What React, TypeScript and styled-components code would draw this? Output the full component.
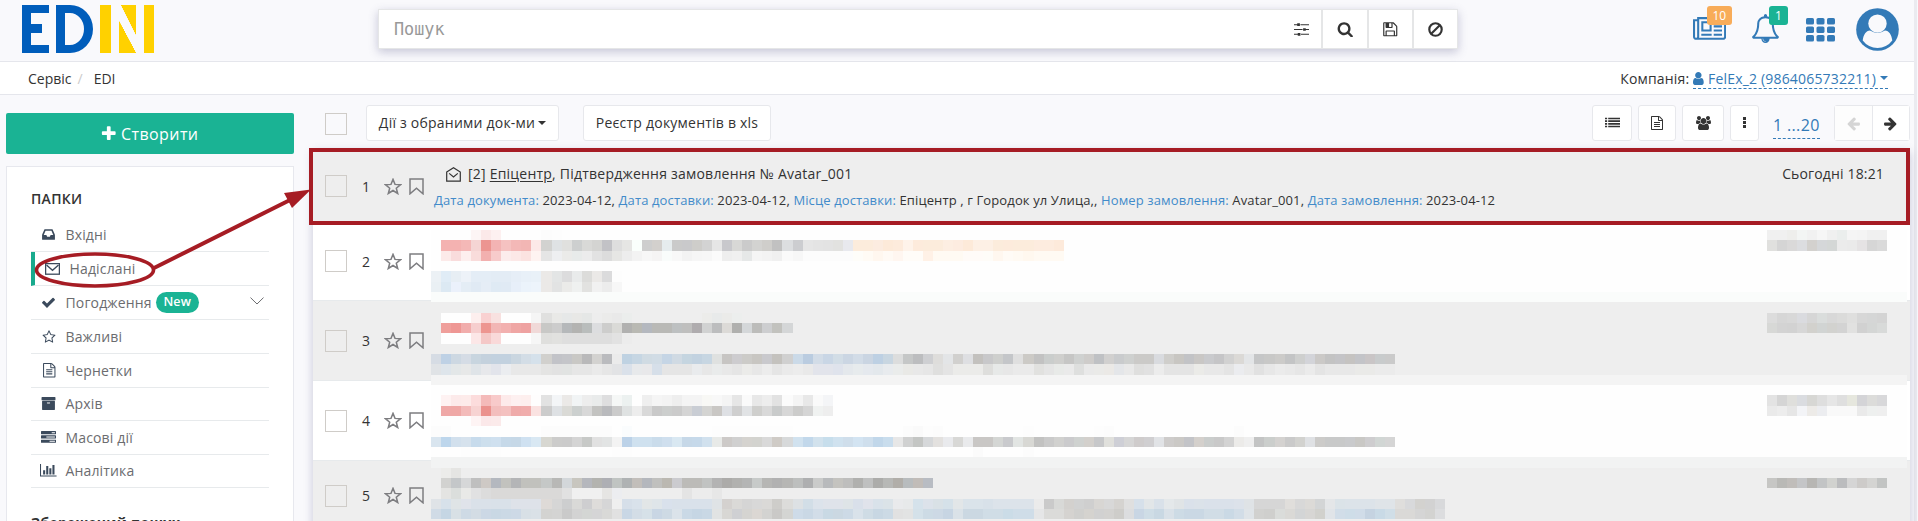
import React from "react";
import styled, { createGlobalStyle } from "styled-components";

const GlobalStyle = createGlobalStyle`
  * { box-sizing: border-box; }
  body { margin: 0; background: #f9f9fc; }
  body, input, button { font-family: "Open Sans", "Noto Sans", sans-serif; font-size: 14px; color: #333; }
`;

/* ---------- icons ---------- */

const PATHS = {
  newspaper:
    "M1024 512h-384v384h384v-384zm128 640v128h-640v-128h640zm0-768v640h-640v-640h640zm640 768v128h-512v-128h512zm0-256v128h-512v-128h512zm0-256v128h-512v-128h512zm0-256v128h-512v-128h512zm-1536 960v-960h-128v960q0 26 19 45t45 19 45-19 19-45zm1664 0v-1088h-1536v1088q0 33-11 64h1483q26 0 45-19t19-45zm128-1216v1216q0 80-56 136t-136 56h-1664q-80 0-136-56t-56-136v-1088h256v-128h1792z",
  bell:
    "M912 1696q0-16-16-16-59 0-101.5-42.5t-42.5-101.5q0-16-16-16t-16 16q0 73 51.5 124.5t124.5 51.5q16 0 16-16zm-666-288h1300q-266-300-266-832 0-51-24-105t-69-103-121.5-80.5-169.5-31.5-169.5 31.5-121.5 80.5-69 103-24 105q0 532-266 832zm1482 0q0 52-38 90t-90 38h-448q0 106-75 181t-181 75-181-75-75-181h-448q-52 0-90-38t-38-90q50-42 91-88t85-119.5 74.5-158.5 50-206 19.5-260q0-152 117-282.5t307-158.5q-8-19-8-39 0-40 28-68t68-28 68 28 28 68q0 20-8 39 190 28 307 158.5t117 282.5q0 139 19.5 260t50 206 74.5 158.5 85 119.5 91 88z",
  plus:
    "M1600 736v192q0 40-28 68t-68 28h-416v416q0 40-28 68t-68 28h-192q-40 0-68-28t-28-68v-416h-416q-40 0-68-28t-28-68v-192q0-40 28-68t68-28h416v-416q0-40 28-68t68-28h192q40 0 68 28t28 68v416h416q40 0 68 28t28 68z",
  inbox:
    "M1151 960h316q-1-3-2.5-8t-2.5-8l-212-496h-708l-212 496q-1 2-2.5 8t-2.5 8h316l95 192h320zm513 30v482q0 26-19 45t-45 19h-1408q-26 0-45-19t-19-45v-482q0-62 25-123l238-552q10-25 36.5-42t52.5-17h832q26 0 52.5 17t36.5 42l238 552q25 61 25 123z",
  check:
    "M1671 566q0 40-28 68l-724 724-136 136q-28 28-68 28t-68-28l-136-136-362-362q-28-28-28-68t28-68l136-136q28-28 68-28t68 28l294 295 656-657q28-28 68-28t68 28l136 136q28 28 28 68z",
  star:
    "M1201 1004l306-297-422-62-189-382-189 382-422 62 306 297-73 421 378-199 377 199zm527-357q0 22-26 48l-363 354 86 500q1 7 1 20 0 50-41 50-19 0-40-12l-449-236-449 236q-22 12-40 12-21 0-31.5-14.5t-10.5-35.5q0-6 2-20l86-500-364-354q-25-27-25-48 0-37 56-46l502-73 225-455q19-41 49-41t49 41l225 455 502 73q56 9 56 46z",
  file:
    "M1596 380q28 28 48 76t20 88v1152q0 40-28 68t-68 28h-1344q-40 0-68-28t-28-68v-1600q0-40 28-68t68-28h896q40 0 88 20t76 48zm-444-244v376h376q-10-29-22-41l-313-313q-12-12-41-22zm384 1528v-1024h-416q-40 0-68-28t-28-68v-416h-768v1536h1280zm-1024-864q0-14 9-23t23-9h704q14 0 23 9t9 23v64q0 14-9 23t-23 9h-704q-14 0-23-9t-9-23v-64zm736 224q14 0 23 9t9 23v64q0 14-9 23t-23 9h-704q-14 0-23-9t-9-23v-64q0-14 9-23t23-9h704zm0 256q14 0 23 9t9 23v64q0 14-9 23t-23 9h-704q-14 0-23-9t-9-23v-64q0-14 9-23t23-9h704z",
  archive:
    "M1088 832q0-26-19-45t-45-19h-256q-26 0-45 19t-19 45 19 45 45 19h256q26 0 45-19t19-45zm576-192v960q0 26-19 45t-45 19h-1408q-26 0-45-19t-19-45v-960q0-26 19-45t45-19h1408q26 0 45 19t19 45zm64-448v256q0 26-19 45t-45 19h-1536q-26 0-45-19t-19-45v-256q0-26 19-45t45-19h1536q26 0 45 19t19 45z",
  tasks:
    "M1024 1408h640v-128h-640v128zm-384-512h1024v-128h-1024v128zm640-512h384v-128h-384v128zm512 832v256q0 26-19 45t-45 19h-1664q-26 0-45-19t-19-45v-256q0-26 19-45t45-19h1664q26 0 45 19t19 45zm0-512v256q0 26-19 45t-45 19h-1664q-26 0-45-19t-19-45v-256q0-26 19-45t45-19h1664q26 0 45 19t19 45zm0-512v256q0 26-19 45t-45 19h-1664q-26 0-45-19t-19-45v-256q0-26 19-45t45-19h1664q26 0 45 19t19 45z",
  chart:
    "M640 896v512h-256v-512h256zm384-512v1024h-256v-1024h256zm1024 1152v128h-2048v-1536h128v1408h1920zm-640-896v768h-256v-768h256zm384-384v1152h-256v-1152h256z",
  search:
    "M1216 832q0-185-131.5-316.5t-316.5-131.5-316.5 131.5-131.5 316.5 131.5 316.5 316.5 131.5 316.5-131.5 131.5-316.5zm512 832q0 52-38 90t-90 38q-54 0-90-38l-343-342q-179 124-399 124-143 0-273.5-55.5t-225-150-150-225-55.5-273.5 55.5-273.5 150-225 225-150 273.5-55.5 273.5 55.5 225 150 150 225 55.5 273.5q0 220-124 399l343 343q37 37 37 90z",
  save:
    "M512 1536h768v-384h-768v384zm896 0h128v-896q0-14-10-38.5t-20-34.5l-281-281q-10-10-34-20t-39-10v416q0 40-28 68t-68 28h-576q-40 0-68-28t-28-68v-416h-128v1280h128v-416q0-40 28-68t68-28h832q40 0 68 28t28 68v416zm-384-928v-320q0-13-9.5-22.5t-22.5-9.5h-192q-13 0-22.5 9.5t-9.5 22.5v320q0 13 9.5 22.5t22.5 9.5h192q13 0 22.5-9.5t9.5-22.5zm640 32v928q0 40-28 68t-68 28h-1344q-40 0-68-28t-28-68v-1344q0-40 28-68t68-28h928q40 0 88 20t76 48l280 280q28 28 48 76t20 88z",
  users:
    "M593 896q-162 5-265 128h-134q-82 0-138-40.5t-56-118.5q0-353 124-353 6 0 43.5 21t97.5 42.5 119 21.5q67 0 133-23-5 37-5 66 0 139 81 256zm1071 637q0 120-73 189.5t-194 69.5h-874q-121 0-194-69.5t-73-189.5q0-53 3.5-103.5t14-109 26.5-108.5 43-97.5 62-81 85.5-53.5 111.5-20q10 0 43 21.5t73 48 107 48 135 21.5 135-21.5 107-48 73-48 43-21.5q61 0 111.5 20t85.5 53.5 62 81 43 97.5 26.5 108.5 14 109 3.5 103.5zm-1024-1277q0 106-75 181t-181 75-181-75-75-181 75-181 181-75 181 75 75 181zm704 384q0 159-112.5 271.5t-271.5 112.5-271.5-112.5-112.5-271.5 112.5-271.5 271.5-112.5 271.5 112.5 112.5 271.5zm576 225q0 78-56 118.5t-138 40.5h-134q-103-123-265-128 81-117 81-256 0-29-5-66 66 23 133 23 59 0 119-21.5t97.5-42.5 43.5-21q124 0 124 353zm-128-609q0 106-75 181t-181 75-181-75-75-181 75-181 181-75 181 75 75 181z",
  arrow:
    "M1600 960q0 54-37 91l-651 651q-39 37-91 37-51 0-90-37l-75-75q-38-38-38-91t38-91l293-293h-704q-52 0-84.5-37.5t-32.5-90.5v-128q0-53 32.5-90.5t84.5-37.5h704l-293-294q-38-36-38-90t38-90l75-75q38-38 90-38 53 0 91 38l651 651q37 35 37 90z",
  user:
    "M1536 1399q0 109-62.5 187t-150.5 78h-854q-88 0-150.5-78t-62.5-187q0-85 8.5-160.5t31.5-152 58.5-131 94-89 134.5-34.5q131 128 313 128t313-128q76 0 134.5 34.5t94 89 58.5 131 31.5 152 8.5 160.5zm-256-887q0 159-112.5 271.5t-271.5 112.5-271.5-112.5-112.5-271.5 112.5-271.5 271.5-112.5 271.5 112.5 112.5 271.5z",
  list:
    "M0 1280h256v192h-256zM0 960h256v192h-256zM0 640h256v192h-256zM0 320h256v192h-256zM384 1280h1408v192h-1408zM384 960h1408v192h-1408zM384 640h1408v192h-1408zM384 320h1408v192h-1408z",
  sliders:
    "M0 256h384v-96h320v320h-320v-96h-384zM768 256h1024v128h-1024zM0 832h1024v128h-1024zM1088 736h320v96h384v128h-384v96h-320zM0 1408h448v-96h320v320h-320v-96h-448zM832 1408h960v128h-960z",
};

const IconSvg = styled.svg`
  display: block;
  flex: none;
  fill: currentColor;
`;

type IconName = keyof typeof PATHS;
type FaProps = { name: IconName; size?: number; flip?: boolean };

// Icons whose advance differs from the usual square: [left edge, width].
const EXTENT: Partial<Record<IconName, [number, number]>> = {
  newspaper: [0, 2048],
  chart: [0, 2048],
  users: [0, 1920],
  user: [256, 1280],
};

const Fa = ({ name, size = 14, flip }: FaProps) => {
  const [x, w] = EXTENT[name] ?? [0, 1792];
  return (
    <IconSvg viewBox={`${x} 0 ${w} 1792`} width={(size * w) / 1792} height={size}>
      <path d={PATHS[name]} transform={flip ? "translate(1792 0) scale(-1 1)" : undefined} />
    </IconSvg>
  );
};

const StrokeSvg = styled.svg<{ $w?: number }>`
  display: block;
  flex: none;
  fill: none;
  stroke: currentColor;
  stroke-width: ${(p) => p.$w ?? 1.3};
`;

const BanIcon = () => (
  <StrokeSvg width="15" height="15" viewBox="0 0 14 14" $w={2}>
    <circle cx="7" cy="7" r="5.8" />
    <path d="M3 11 11 3" />
  </StrokeSvg>
);
const EnvelopeIcon = () => (
  <StrokeSvg width="15" height="12" viewBox="0 0 15 12">
    <rect x="0.6" y="0.6" width="13.8" height="10.6" />
    <path d="M1.5 2 7.5 7.3 13.5 2" />
  </StrokeSvg>
);
const OpenEnvelopeIcon = () => (
  <StrokeSvg width="15" height="15" viewBox="0 0 15 15" $w={1.2}>
    <path d="M.7 5 7.5.8 14.3 5v9.1H.7z" />
    <path d="M3.2 6.4 7.5 10l4.3-3.6" />
  </StrokeSvg>
);
const RowStarIcon = () => (
  <StrokeSvg width="18" height="17" viewBox="0 0 18 17" $w={1.5}>
    <path d="M9 1.4 11 6.4l5.6.3-4.3 3.5 1.4 5.3L9 12.5l-4.7 3 1.4-5.3L1.4 6.7 7 6.4z" />
  </StrokeSvg>
);
const BookmarkIcon = () => (
  <StrokeSvg width="15" height="17" viewBox="0 0 15 17" $w={1.5}>
    <path d="M1 1h13v14.8l-6.5-5.6L1 15.8z" />
  </StrokeSvg>
);
const ChevronIcon = () => (
  <StrokeSvg width="14" height="8" viewBox="0 0 14 8" $w={1}>
    <path d="M.5.6 7 7 13.5.6" />
  </StrokeSvg>
);
const GridIcon = () => (
  <IconSvg width="29" height="24" viewBox="0 0 29 24">
    {[0, 8.5, 17].map((y) =>
      [0, 10.5, 21].map((x) => <rect key={`${x}-${y}`} x={x} y={y} width="8" height="6.5" rx="1.6" />)
    )}
  </IconSvg>
);
const AvatarIcon = () => (
  <IconSvg width="43" height="43" viewBox="0 0 43 43">
    <circle cx="21.5" cy="21.5" r="21.3" />
    <path d="M6.7 32.5C7.6 26.5 10 22.8 14 22.6a13.6 13.6 0 0 0 15 0c4 .2 6.4 3.9 7.3 9.9a18.4 18.4 0 0 1-29.6 0z" fill="#f9f9fc" />
    <circle cx="21.5" cy="15.6" r="9.2" fill="#f9f9fc" />
  </IconSvg>
);

const Caret = styled.i<{ $size?: number }>`
  flex: none;
  width: 0;
  height: 0;
  border: ${(p) => p.$size ?? 4}px solid transparent;
  border-top-color: currentColor;
  border-bottom: 0;
`;

/* ---------- shell ---------- */

const Page = styled.div`
  position: relative;
  display: flex;
  height: 521px;
  overflow: hidden;
`;
const Content = styled.div`
  flex: 1;
  min-width: 0;
`;
const Gutter = styled.div`
  width: 4px;
  background: #ebebf0;
  border-right: 1px solid #f9f9fc;
`;

const Header = styled.header`
  display: flex;
  height: 62px;
  border-bottom: 1px solid #e5e6ec;
`;
const Logo = styled.div`
  display: flex;
  flex: none;
  width: 378px;
  padding: 5px 0 0 22px;
`;
const LetterE = styled.span`
  width: 27px;
  height: 48px;
  margin-right: 7px;
  border: solid #005dbb;
  border-width: 8px 0 8px 9px;
  padding-top: 11px;
  &::after {
    content: "";
    display: block;
    width: 11px;
    height: 9px;
    background: #005dbb;
  }
`;
const LetterD = styled.span`
  width: 37px;
  height: 48px;
  margin-right: 7px;
  border: solid #005dbb;
  border-width: 8px 9px 8px 9px;
  border-radius: 0 23px 23px 0 / 0 24px 24px 0;
`;
const YellowBar = styled.span<{ $w: number }>`
  width: ${(p) => p.$w}px;
  height: 48px;
  background: #ffd100;
`;
const YellowDiagonal = styled.span`
  width: 17px;
  height: 48px;
  margin: 0 8px;
  background:
    linear-gradient(to bottom left, #ffd100 50%, transparent 51%) right top / 15px 30px no-repeat,
    linear-gradient(to top right, #ffd100 50%, transparent 51%) left bottom / 17px 32px no-repeat;
`;

const SearchBox = styled.div`
  display: flex;
  flex: none;
  width: 1080px;
  height: 40px;
  margin-top: 9px;
  border: 1px solid #e5e6e7;
  background: #fff;
  box-shadow: 0 3px 9px rgba(90, 90, 140, 0.32);
`;
const SearchInput = styled.input`
  flex: 1;
  border: 0;
  padding: 0 0 1px 15px;
  outline: 0;
  background: none;
  font-family: "DejaVu Sans Mono", monospace;
  font-size: 16.8px;
  &::placeholder { color: #999; opacity: 1; }
`;
const SearchButton = styled.button<{ $first?: boolean; $w: number }>`
  display: flex;
  align-items: center;
  justify-content: center;
  width: ${(p) => p.$w}px;
  border: 0;
  border-left: ${(p) => (p.$first ? 0 : 2)}px solid #e5e6e7;
  background: none;
  padding: 0;
`;

const HeaderIcons = styled.div`
  display: flex;
  margin-left: auto;
  padding-right: 15px;
  color: #337ab7;
`;
const HeaderIcon = styled.div<{ $top: number; $gap?: number }>`
  position: relative;
  margin-top: ${(p) => p.$top}px;
  margin-right: ${(p) => p.$gap ?? 0}px;
`;
const CountBadge = styled.span<{ $color: string; $left: number; $top: number; $w: number }>`
  position: absolute;
  left: ${(p) => p.$left}px;
  top: ${(p) => p.$top}px;
  width: ${(p) => p.$w}px;
  height: 19px;
  border-radius: 3px;
  background: ${(p) => p.$color};
  color: #fff;
  font-size: 12px;
  line-height: 19px;
  text-align: center;
`;

const Crumbs = styled.nav`
  display: flex;
  align-items: center;
  height: 33px;
  padding: 0 26px 0 28px;
  border-bottom: 1px solid #e5e6ec;
  background: #fff;
`;
const CrumbSlash = styled.span`
  margin: 0 11px 0 6px;
  color: #ccc;
`;
const Company = styled.div`
  display: flex;
  align-items: center;
  margin-left: auto;
  gap: 4px;
  letter-spacing: 0.18px;
`;
const CompanyLink = styled.a`
  display: flex;
  align-items: center;
  gap: 4px;
  height: 21px;
  margin-bottom: -1px;
  border-bottom: 1px dashed #337ab7;
  color: #337ab7;
`;

const Body = styled.div`
  display: flex;
  padding-left: 6px;
`;

/* ---------- sidebar ---------- */

const Sidebar = styled.aside`
  width: 288px;
  padding-top: 18px;
`;
const CreateButton = styled.button`
  display: flex;
  align-items: center;
  justify-content: center;
  gap: 4px;
  width: 100%;
  height: 41px;
  border: 0;
  border-radius: 2px;
  padding: 0 8px 0 6px;
  background: #1ab394;
  color: #fff;
  font-size: 16px;
  letter-spacing: 0.4px;
`;
const Folders = styled.div`
  height: 400px;
  margin-top: 12px;
  padding: 22px 24px 0;
  border: 1px solid #e7e8ee;
  background: #fff;
`;
const SectionTitle = styled.h5`
  margin: 0;
  font-size: 14px;
  font-weight: 600;
  line-height: 20px;
  letter-spacing: 0.3px;
`;
const SavedTitle = styled(SectionTitle)`
  margin-top: 25px;
  font-weight: 700;
`;
const FolderList = styled.ul`
  list-style: none;
  margin: 9px 0 0;
  padding: 0;
`;
const Folder = styled.li<{ $active?: boolean }>`
  display: flex;
  align-items: center;
  height: 34px;
  border-bottom: 1px solid #e7eaec;
  border-left: ${(p) => (p.$active ? 4 : 0)}px solid #19aa8d;
  color: #6b6c6f;
  letter-spacing: 0.15px;
  &:nth-child(6), &:nth-child(8) { height: 33px; padding-bottom: 1px; }
`;
const FolderIcon = styled.span`
  display: flex;
  justify-content: center;
  width: 34.5px;
  padding-left: 1px;
  color: #3b4a5c;
`;
const NewBadge = styled.span`
  margin-left: 4px;
  width: 43px;
  height: 21px;
  border-radius: 11px;
  background: #1ab394;
  color: #fff;
  font-size: 12.5px;
  font-weight: 600;
  line-height: 20px;
  text-align: center;
`;
const FolderChevron = styled.span`
  margin: -3px 5px 0 auto;
`;

/* ---------- document list ---------- */

const Main = styled.main`
  flex: 1;
  padding: 10px 4px 0 19px;
`;
const Checkbox = styled.span`
  flex: none;
  width: 22px;
  height: 22px;
  border: 1px solid #cfccc8;
`;
const Toolbar = styled.div`
  display: flex;
  align-items: center;
  height: 36px;
  padding-left: 12px;
  & > ${Checkbox} { margin-top: 2px; }
`;
const ToolButton = styled.button<{ $w: number; $ml: number }>`
  display: flex;
  align-items: center;
  justify-content: center;
  gap: 3px;
  width: ${(p) => p.$w}px;
  height: 36px;
  margin-left: ${(p) => p.$ml}px;
  padding: 0 0 1px;
  border: 1px solid #e7e8ec;
  border-radius: 3px;
  background: #fff;
  letter-spacing: 0.22px;
  white-space: nowrap;
`;
const ToolRight = styled.div`
  display: flex;
  align-items: center;
  margin-left: auto;
`;
const Dots = styled.span`
  width: 3px;
  height: 11px;
  background: repeating-linear-gradient(#333 0 3px, transparent 3px 4px);
`;
const PageRange = styled.a`
  margin: 7px 0 0 14px;
  width: 47px;
  padding-bottom: 1px;
  line-height: 23px;
  border-bottom: 1px dashed #337ab7;
  color: #337ab7;
  font-size: 16px;
  letter-spacing: 0.35px;
  white-space: nowrap;
`;
const Pager = styled.div`
  display: flex;
  width: 76px;
  height: 36px;
  margin-left: 14px;
  border: 1px solid #e7e8ec;
  border-radius: 3px;
  background: #fff;
`;
const PagerButton = styled.span<{ $off?: boolean }>`
  flex: 1;
  display: flex;
  align-items: center;
  justify-content: center;
  background: ${(p) => (p.$off ? "#fdfdfd" : "#fff")};
  color: ${(p) => (p.$off ? "#d5d5d5" : "#333")};
  & + & { border-left: 1px solid #e7e8ec; }
`;

const List = styled.div`
  position: relative;
  margin-top: 8px;
  box-shadow: 0 3px 9px rgba(90, 90, 140, 0.32);
`;
const Row = styled.div<{ $h: number; $odd?: boolean }>`
  display: flex;
  align-items: center;
  height: ${(p) => p.$h}px;
  padding: 0 26px 0 12px;
  border-bottom: 1px solid #e7eaec;
  background: ${(p) => (p.$odd ? "#eee" : "#fff")};
  &:nth-child(2) { padding-bottom: 2px; }
`;
const RowNumber = styled.span`
  width: 37px;
  padding-left: 15px;
`;
const RowMarks = styled.span`
  display: flex;
  align-items: center;
  gap: 7px;
  width: 50px;
  color: #7d7d80;
`;
const RowText = styled.div`
  align-self: flex-start;
  padding-top: 13px;
`;
const RowTitle = styled.div`
  display: flex;
  align-items: center;
  padding-left: 12px;
  line-height: 24px;
  letter-spacing: 0.22px;
  white-space: pre;
`;
const Partner = styled.span`
  text-decoration: underline;
  text-underline-offset: 2px;
`;
const TitleIcon = styled.span`
  margin-right: 7px;
`;
const Details = styled.div`
  margin-top: 4px;
  line-height: 20px;
  font-size: 13px;
  letter-spacing: 0.122px;
  white-space: pre;
`;
const Key = styled.span`
  color: #428bca;
`;
const RowDate = styled.time`
  align-self: flex-start;
  margin-left: auto;
  padding-top: 13px;
  line-height: 24px;
  letter-spacing: 0.15px;
`;
const HighlightFrame = styled.div`
  position: absolute;
  left: -4px;
  top: -1px;
  width: 1601px;
  height: 77px;
  border: 4px solid #a61c24;
`;

/* ---------- pixelated cover over the private rows ---------- */

const Mosaic = styled.div`
  position: absolute;
  left: 118px;
  top: 81px;
  width: 1476px;
  overflow: hidden;
`;
const MosaicLine = styled.div`
  display: flex;
`;
const MosaicRun = styled.span`
  flex: none;
`;

const CELL_W = 10.042;
const CELL_H = 10.333;
const span = (from: number, to: number, unit: number) => Math.round(to * unit) - Math.round(from * unit);

type Run = [start: number, colors: string];
type Line = { bg: string; runs?: Run[] };

// Two digits are a grey level, six a full colour; "*n" repeats a cell.
const expand = (s: string): string[] =>
  s.split(" ").flatMap((t) => {
    const [c, n] = t.split("*");
    return Array<string>(Number(n ?? 1)).fill("#" + (c.length === 2 ? c + c + c : c));
  });

const W = "#fefefe";
const G = "#eee";
const LINES: Line[] = [
  { bg: W, runs: [[4, "fdf5f5 fbe9e9 fdf0f0"], [11, "fc fd"], [133, "f0 f0 eeeeec f3f5f4 f1 f6 f0 ebeeed f5 f4 f0 f0"]] },
  { bg: W, runs: [
    [1, "f4b2b1 f4b2b1 f4b8b7 f5d5d4 ec9591 f3b3b3 f5c2c1 f3b8b7 f2b6b4 fce9e8 d2d2d0 dfe2e4 e0e0de cdcfcf d9d9d7 d4d4d2 c2c2c6 de e6e6e4 fafffc ce d3d0cd e6ecee ca c9c9cb cecdca d3 e6 c8c8cc d8d8d6 cb d3d3d1 cfcecb c1 dcdee0 cccdd0 e6 e4 e3 e2e2e0 e8e9ee fcecdc*2 fcece0 fdead9 fdebdc fef3ea fdebdc fcecdc*2 fdeee2 fdece0 fdead9 fdf0e5*2 fcecdc fdebdc fcecdc*2 fdecdf*2 fdeadb"],
    [133, "e0e0de d5 dad9d9 dcdde0 d3d1ce d5d7d9 d4d7d6 eb ea e5e3e4 d6 da"]] },
  { bg: W, runs: [
    [1, "fceae9 f9dcdc fdefee f9dcdb f2b0af f7cbcb fcecec fce8e7 fbe3e1 fef3f1 e5 eeeff1 ebebe9 e8ebea ec e2 dc e6e6e4 ed f3 f7 f5f4f4 f9fcfb f8 f3 f6 f7 fb ee f0 e6e8e8 f5 f3 f0 fa f7 fc*5 fefdf9 fffbf5 fff7ef fffaf5 fff6f0 fffcf8*2 fff1e6 fffaf3*3 fffbf8*2 fefcf8 fff7ef fffbf6 fffaf3 fff8ef fffaf3*3"]] },
  { bg: W },
  { bg: W, runs: [[0, "ecf1f5 e0ecf6 e7eef4 edf2f8 e4edf6*2 e3ecf5*2 e6eef7 e8f0f8 e9f1f8 ebe9e7 e3e5e5 dcdcdd e9ebeb dcdcda ebe9e7 dbdbdc fd"]] },
  { bg: W, runs: [[0, "eaf0f4 dce9f3 ebf1fb e4edf5 e0eaf4 e5edf6 dfeaf4 e0eaf4 e7eff9 ebf3fb edf4fb ebe9e7 e2e3e3 ebebe9 eff1f0 e2e2e0 f1 ec f7"]] },
  { bg: "#fafcfb" },
  { bg: G },
  { bg: G, runs: [
    [1, "fe*3 fdefee f9d1d1 f8e1e0 fe*3 f5 e0e0df e9e9e7 e6e8e8 e8e8e6 e5e7e6 ed ebebea e9 ebedec"], [27, "ececea e8eaea ebebe9 eceeed"],
    [133, "dc d6 d8 dadbdf d6 dadddc d8 dbdbda dfdfde d7 d5d6d6 d4"]] },
  { bg: G, runs: [
    [1, "ef9f9b ee9794 f1adac f6cece ed9590 f2b6b5 f2b0af efa6a4 eea2a1 f0d9d8 c8c8c6 cc b5b8ba b3b3b1 b9bdbc dcdddf cdcdcc dadad7 b1b1b0 b9b9b3 b4b8bf b9b9b6*2 bdc0c1 bfbfbe afacae d1d2d2 bcbdbe dcdad7 b0b0ae d4d7d9 bcbcba cdced0 c2c2be d4d6d7"],
    [133, "d7d8d6 d3 d2 d7 d2d1cd d1d4d3 d2d2cf d3 e1e1e0 d1 d4d6d5 d8dad9"]] },
  { bg: G, runs: [[1, "fe*3 fce7e7 f4c8c7 f9d9d9 fe*3 f6 dfdfdd e1e1df de*5 e2 ec"]] },
  { bg: G },
  { bg: G, runs: [[0, "d6dce4 bed1e5 cdd8e2 d5dce5 c8d5df c4d1dd c2d1df*2 cad6e0 d3dde6 d5e1eb d1d0cd c2c3c8 c4c5c9 c9c8c5 b9b9ba d3d2d0 babbbe eb bfd2e2 c6d6e3 d0dbe3 d1dce5 c5d5e5 d0dae3 c5d5e0 c2d2e0 c7d6e2 dfe1e0 c7c5c3 cdcccf cccbc8 c8c6c2 c9c9cd c4c2be d0 cbdae8 bacce0 d2dce7 c9d6e5 d2dde6 cbd6e3 d2dce7 cad5e2 bdd0e3 c8d6e1 dcdddd c5c7c7 bcbdbf cecfd2 dedddb e3e5e7 d1d0ce dedfe2 c3c1be c8c8ca cecfcd c4c6c9 df cccac6 c2 cacdcc cfcfcd c6c6c5 cfd1d0 ceccca bfc1c4 d1d0cf c9cbcd ced0cf cbcac8*2 d9dbdf cfcecb c8c6c2 c2c3c6 c9c7c5 c9cacd c5c5c7 d1 dbd9d6 e3e5e7 c5c6c7 c8c8c7 cccbc9 c3c4c5 cecfce d3d4d9 cbc9c7 c3 c4c4c7 c5c3c1 c3c4c8 c9c5c6 c8cbcc ca"]] },
  { bg: G, runs: [[0, "e0e3e6 dee5eb e3e7e8 e7e8e8 dfe4e8 e7e8eb e2e4eb ebedf0 e8*3 e4e4e3 e2 e1e3e2 e6*2 ea e6 e2e3e5 dae1ea e7e9eb e8e8ea d6dfe9 e5*3 e9ebed e7 e9ebeb e8 e5 ebebe9 e7 ec e5 ea ec e9 e2e4eb*2 dfe3ec e4e8ec e7ebed e5e9ee e3e8ec e8ebee eaeceb e9e9e6 e8 e6 dfdfde e4 ebebe9*3 dededc e7e9e8 e7 ea*2 e1e1df e5 e8eae8 ea dedfde e9 eaeae8 ebe9e6 e4e6e9 e9 dfdfde e1 ec e4*3 ebebe8 e8*2 e4 ebecef e9 e1 e7 eb e9 e6 eb e4 e8*3 eaeae8*2 eb*2"]] },
  { bg: "#f4f4f4" },
  { bg: W },
  { bg: W, runs: [
    [1, "fef2f2 fceaea fdebea fcdcdc f4bab9 f8caca fdeaea fdf0f0 fdefee fefdfd e2 f3f5f7 ebe9e7 f1f4f5 ed e9ebeb dededf f5f7f6 ecf1f0 fe ef f5 f3 ee f4 f4 f8f8f5 f8 f4 e6 fa e8 ed e2 fb f4 e8 fa f4f5f7"],
    [133, "e3 d5 dfdfdc dadce0 d7d7d4 de e6 df e6e7de d4d4d7 dcdcda d8d8da"]] },
  { bg: W, runs: [
    [1, "efa8a7 efa8a6 f3bbba f7d3d2 eb918d f3bebd f4c1c0 efabaa f0adac fae2e1 cc dee1e4 dadad6 ccd0cf d8 c3c3c1 b9babd cb dfe2e2 ed d9 c9 cccecd cb d5 c9cdd4 d4d4d2 c9c7c4 dee0e4 cf e1e3e5 cfcfcd d9 c9cbcb d7 cccccb d5 f0f2f1 ee"],
    [133, "ea ed e6 f3f4f7 edebe8 ecedf0 f9*3 ea eef0ef ef"]] },
  { bg: W, runs: [[4, "fef4f4 fbe8e9 fbeaea"]] },
  { bg: W, runs: [[0, "fc*2"], [11, "fc*7"], [19, "fafcfd"], [28, "fd*8"], [47, "fc fa fd fc"], [59, "fd"], [66, "fd fc"], [80, "fc"]] },
  { bg: W, runs: [[0, "d9e5ef bdd6ec d2e0ed d6e2ed c7dbec cddfed cfe0ef c6d9e9 c6d8e7 cfe1f1 d9e8f3 d7d7d1 cccccb cb d4 c7c9c7 e1 e2e4e4 f3 bcd2e8 cfe1ef*2 cadceb cfdfee d9e8f2 c6d8e8 c6d9ea d1e1ee e8eae8 cdcac8 d0 d5d3cf d3d3cf d9 cfcbc6 d7d9da d1e2ef c2d8eb d2e2ed c7deec d0e2ef cfdeeb d3e4f2 cfdfed c1d7ea c9dded e7 d0d1d1 c4c6c4 d6d8da e3e1df e9eaed d8d8d6 e9eaec c9c7c5*2 d4d6d4 c9cacd e2e5e3 d8d8d4 c2c2c1 ca d1d1cf cbcbcd cfd2d0 d3d0cc c7c8ca e0e0dc cecfd6 d6 cfcccc d0cfd1 e1e3e6 cecccb cbc9c6 c3c4c8 d4d0cc cacdcc c9 d3 ecebe9 ef c3c4c4 cbcecc d4d2d0 ca d2d2cf dfe1e4 cccbc9 c8c9c9*2 c9cacc c9c8c5 cecdcf d1d6d4 d5"]] },
  { bg: W, runs: [[3, "fd*4"], [18, "fd*2"], [54, "fb"], [59, "fc"]] },
  { bg: "#f2f3f3" },
  { bg: G, runs: [[1, "ececea e5e5e3"]] },
  { bg: G, runs: [
    [1, "d2d2d0 c4c7c9 d6d7d8 bfbfbf cec9c5 b4b8bf c2c2be b4b5b7 c1c1bd*2 c5c8c7 b8b8b6 d3d7da c8c6bf b5b7bd b3b3af aeafb4 c0c4c2 afb2b3 c2beba b4b7bd c0c0be bbb8b1 cbcbcf bcbbb8*2 c1c3c2 b3 acaba9 b1b1af b4b5b5 c7cac9 b6b6b4 b1 b6b6b4 bdbfbe aeafb0 cacbca b8babc c4c3bf bebebd b0b0ae bfc0c0 acacaa b7b8b6 b1aea9 b8bcbe c1bcb8 b8bcc3"],
    [133, "c6c6c4 b9b9b6 c0bdba c4c5c7 b7b6b3 c2c4c5 d1d2cf bbbcbe d5 cdcbc9 d4d4d2 c2c4c3"]] },
  { bg: G, runs: [[1, "e4e4e2 dbdedc e9e9e7 e1e1e2 dc dad9d8*7 e1 f0*3 e6e5e3 ecedf0"], [25, "e4 ec*2 e7"]] },
  { bg: G, runs: [[0, "dfe3e7 d7e1ea dfe4e6 e0e3ea dae1e9*2 d9e1e9*2 dee2e9*3 dedad7 d6 cdcecf d9d9d7 ceced0 dedcda d6d6d7 ef d6dfe9 d9e2eb e2e6e7 dfe5e9 d9e1ec d9e1ea*4 dfe3e6 d4d1cf dad9d7 d5 d8 dad9d7 cecdca dcdcda dde1e4 d2dee7 dce3eb dfe3ea dfe3ea dee4e7 d9e0ea e0e3eb d9e2ea dbe3e8 e9eaec e7e9ea d5e2eb dce2ea d9e1e6 d5e1e9 e2e6e8 dae3ea*2 d8e1e9 dce3ea*4 eb cacaca d8d9d7 d3d1ce d1d2d2 cfcfcf d8d6d3 d8 d5d3d0 df d6e0ea e2e6e8 d9e1e9 e4e8ea e0e4e6 dae1ea dbe2e9 dae1ea*3 dce2ea dfe3e6 d6*3 e0dedb d8 dcdad7 d3d5d6 e4e6e8 dbe3e8 dce3e9*3 dfe4e8*2 dfdedc d8d9db d3d2cf d2 d8d9db"]] },
  { bg: G, runs: [[0, "d0dbe6 c5d6e4 d8e0e5 cedae5 d3dce4 ccd8e5 c9d8e4 cbd9e5 cdd9e6 d8e0e6 dae1e7 d3d3d1 d4d4d3 ca d3 d4d6d4 d5d5d6 d9d9d7 e1 c9d7e5 d3dde6 d6e1e8 c9d6e4 cedae4 dbe3ea cad9e6 c6d6e4 c9d8e5 e1e3e3 d8d7d4 cfd0d3 d5d4d1 dbd7d3 d3d3d1 cac9c7 d4d5d3 cedbe8 cad8e5 d2dde8 c9d9e4 cbd8e2 cddae6 d9e2ea cfdce5 c8d7e3 ccdae5 e1 e2e3e3 d4e1e9 cddbe5 cdd9e5 c7d5e3 dae2e8 cbd8e2*2 d0dde6*2 cbdce7 cfdde8 cfdde8 e5e6e7 dbdbd9*2 d5d3d0 d0d0ce d5d3cf d1 d3d2d0 cecdca dcdddf c9d6e4 cfdde6 c9d8e3 d9e1e8 cddbe5 cad8e4*2 d1dde6*2 cad9e5 d2dde7 dfe4e8 d1d1cf cfcfcd dadcda dad9d6 d3d5d6 d7d6d4 d1d1cd e0e4e8 d1dde8 cedde8 d0dce8 c5d3e1 c9dae6 d0dee7 dad9d7*2 d5 d3d3d1 dcdddf"]] },
  { bg: G },
];

const MosaicCover = () => (
  <Mosaic>
    {LINES.map((line, i) => {
      let at = 0;
      return (
        <MosaicLine key={i} style={{ height: span(i, i + 1, CELL_H), background: line.bg }}>
          {(line.runs ?? []).flatMap(([start, colors]) => {
            const cells = expand(colors);
            const gap = span(at, start, CELL_W);
            at = start + cells.length;
            return [
              <MosaicRun key={`g${start}`} style={{ width: gap }} />,
              ...cells.map((c, j) => (
                <MosaicRun
                  key={`${start}-${j}`}
                  style={{ width: span(start + j, start + j + 1, CELL_W), background: c }}
                />
              )),
            ];
          })}
        </MosaicLine>
      );
    })}
  </Mosaic>
);

/* ---------- red pointer from the folder to the document ---------- */

const Pointer = styled.svg`
  position: absolute;
  left: 0;
  top: 0;
  pointer-events: none;
`;

const folders: { icon: React.ReactNode; label: string; active?: boolean; isNew?: boolean }[] = [
  { icon: <Fa name="inbox" size={15} />, label: "Вхідні" },
  { icon: <EnvelopeIcon />, label: "Надіслані", active: true },
  { icon: <Fa name="check" size={15} />, label: "Погодження", isNew: true },
  { icon: <Fa name="star" />, label: "Важливі" },
  { icon: <Fa name="file" size={14.5} />, label: "Чернетки" },
  { icon: <Fa name="archive" size={15} />, label: "Архів" },
  { icon: <Fa name="tasks" size={15} />, label: "Масові дії" },
  { icon: <Fa name="chart" size={14.5} />, label: "Аналітика" },
];

const details: [string, string][] = [
  ["Дата документа:", " 2023-04-12, "],
  ["Дата доставки:", " 2023-04-12, "],
  ["Місце доставки:", " Епіцентр , г Городок ул Улица,, "],
  ["Номер замовлення:", " Avatar_001, "],
  ["Дата замовлення:", " 2023-04-12"],
];

const rowHeights = [75, 77, 80, 80, 70];

export default function App() {
  return (
    <Page>
      <GlobalStyle />
      <Content>
        <Header>
          <Logo role="img" aria-label="EDIN">
            <LetterE />
            <LetterD />
            <YellowBar $w={11} />
            <YellowDiagonal />
            <YellowBar $w={10} />
          </Logo>
          <SearchBox>
            <SearchInput placeholder="Пошук" />
            <SearchButton $first $w={40}><Fa name="sliders" size={15} /></SearchButton>
            <SearchButton $w={46}><Fa name="search" size={16.5} /></SearchButton>
            <SearchButton $w={45}><Fa name="save" size={16.5} /></SearchButton>
            <SearchButton $w={45}><BanIcon /></SearchButton>
          </SearchBox>
          <HeaderIcons>
            <HeaderIcon $top={15} $gap={25}>
              <Fa name="newspaper" size={29} />
              <CountBadge $color="#f8ac59" $left={14} $top={-9} $w={25}>10</CountBadge>
            </HeaderIcon>
            <HeaderIcon $top={14} $gap={26}>
              <Fa name="bell" size={29} />
              <CountBadge $color="#1ab394" $left={18} $top={-8} $w={19}>1</CountBadge>
            </HeaderIcon>
            <HeaderIcon $top={18} $gap={21}><GridIcon /></HeaderIcon>
            <HeaderIcon $top={8}><AvatarIcon /></HeaderIcon>
          </HeaderIcons>
        </Header>
        <Crumbs>
          Сервіс<CrumbSlash>/</CrumbSlash>EDI
          <Company>
            Компанія:
            <CompanyLink>
              <Fa name="user" size={15} />FelEx_2 (9864065732211)<Caret $size={4.5} />
            </CompanyLink>
          </Company>
        </Crumbs>
        <Body>
          <Sidebar>
            <CreateButton><Fa name="plus" size={17.5} />Створити</CreateButton>
            <Folders>
              <SectionTitle>ПАПКИ</SectionTitle>
              <FolderList>
                {folders.map((f) => (
                  <Folder key={f.label} $active={f.active}>
                    <FolderIcon>{f.icon}</FolderIcon>
                    {f.label}
                    {f.isNew && <NewBadge>New</NewBadge>}
                    {f.isNew && <FolderChevron><ChevronIcon /></FolderChevron>}
                  </Folder>
                ))}
              </FolderList>
              <SavedTitle>Збережений пошук</SavedTitle>
            </Folders>
          </Sidebar>
          <Main>
            <Toolbar>
              <Checkbox />
              <ToolButton $w={193} $ml={19}>Дії з обраними док-ми <Caret /></ToolButton>
              <ToolButton $w={188} $ml={24}>Реєстр документів в xls</ToolButton>
              <ToolRight>
                <ToolButton $w={40} $ml={0}><Fa name="list" size={15} /></ToolButton>
                <ToolButton $w={38} $ml={6}><Fa name="file" /></ToolButton>
                <ToolButton $w={42} $ml={6}><Fa name="users" /></ToolButton>
                <ToolButton $w={29} $ml={6}><Dots /></ToolButton>
                <PageRange>1 ...20</PageRange>
                <Pager>
                  <PagerButton $off><Fa name="arrow" size={15} flip /></PagerButton>
                  <PagerButton><Fa name="arrow" size={15} /></PagerButton>
                </Pager>
              </ToolRight>
            </Toolbar>
            <List>
              {rowHeights.map((h, i) => (
                <Row key={i} $h={h} $odd={i % 2 === 0}>
                  <Checkbox />
                  <RowNumber>{i + 1}</RowNumber>
                  <RowMarks><RowStarIcon /><BookmarkIcon /></RowMarks>
                  {i === 0 && (
                    <>
                      <RowText>
                        <RowTitle>
                          <TitleIcon><OpenEnvelopeIcon /></TitleIcon>
                          [2] <Partner>Епіцентр</Partner>, Підтвердження замовлення № Avatar_001
                        </RowTitle>
                        <Details>
                          {details.map(([k, v]) => (
                            <React.Fragment key={k}><Key>{k}</Key>{v}</React.Fragment>
                          ))}
                        </Details>
                      </RowText>
                      <RowDate>Сьогодні 18:21</RowDate>
                    </>
                  )}
                </Row>
              ))}
              <MosaicCover />
              <HighlightFrame />
            </List>
          </Main>
        </Body>
      </Content>
      <Gutter />
      <Pointer width="320" height="300" viewBox="0 0 320 300">
        <ellipse cx="95" cy="270" rx="58.5" ry="16" fill="none" stroke="#a61c24" strokeWidth="3.6" />
        <path d="M154 268 290 200" stroke="#a61c24" strokeWidth="4" />
        <path d="M311 189.5 284 193 292 208z" fill="#a61c24" />
      </Pointer>
    </Page>
  );
}
